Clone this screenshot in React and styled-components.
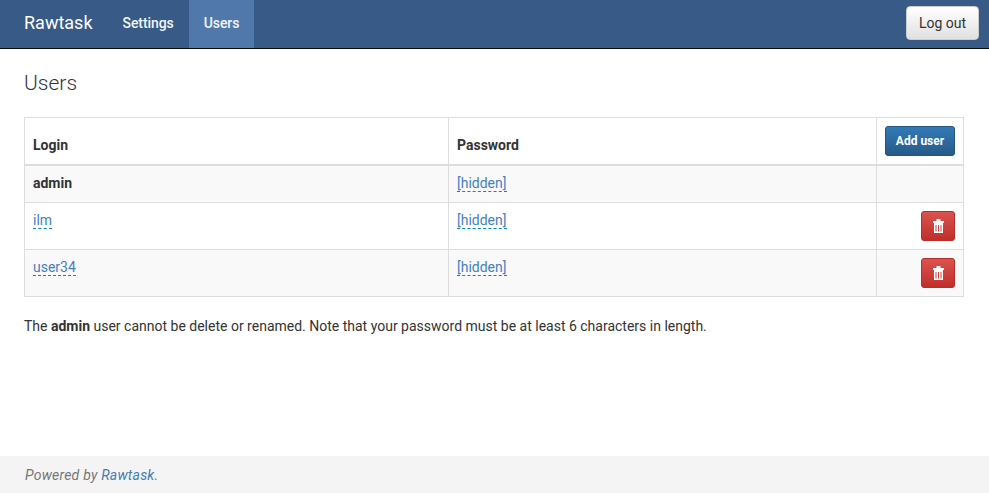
import React from 'react';
import styled, { createGlobalStyle } from 'styled-components';

const GlobalStyle = createGlobalStyle`
  html, body {
    margin: 0;
    padding: 0;
    height: 100%;
    background: #fff;
  }
  body {
    font-family: Roboto, "Liberation Sans", sans-serif;
    font-size: 14px;
    line-height: 20px;
    color: #333;
  }
  #root {
    min-height: 100vh;
    display: flex;
    flex-direction: column;
  }
  * {
    box-sizing: border-box;
  }
`;

const Navbar = styled.nav`
  display: flex;
  align-items: stretch;
  height: 49px;
  padding: 0 10px 0 9px;
  background: #375a87;
  border-bottom: 1px solid #080808;
`;

const Brand = styled.a`
  padding: 13px 15px 15px;
  font-size: 18px;
  line-height: 20px;
  color: #fff;
`;

const NavLink = styled.a`
  padding: 13px 15px 15px;
  font-weight: 500;
  letter-spacing: -0.08px;
  color: #f2f5f9;
  background: ${props => (props.active ? '#5078ab' : 'transparent')};
`;

const LogoutButton = styled.button`
  align-self: flex-start;
  margin: 6px 0 0 auto;
  width: 73px;
  height: 34px;
  padding: 0;
  font-family: inherit;
  font-size: 14px;
  color: #333;
  background: linear-gradient(to bottom, #fff 0%, #e0e0e0 100%);
  border: 1px solid #ccc;
  border-radius: 4px;
`;

const Main = styled.main`
  padding: 0 25px 0 24px;
`;

const Heading = styled.h1`
  margin: 23px 0 23px;
  font-size: 21px;
  line-height: 22px;
  font-weight: 300;
  color: #333;
`;

const UsersTable = styled.table`
  width: 939px;
  table-layout: fixed;
  border-collapse: collapse;
  border: 1px solid #ddd;
`;

const HeadCell = styled.th`
  height: 47px;
  padding: 8px 8px ${props => (props.action ? '8px' : '9px')};
  text-align: left;
  vertical-align: bottom;
  font-weight: 700;
  border: 1px solid #ddd;
  border-bottom-width: 2px;
`;

const Row = styled.tr`
  background: ${props => (props.striped ? '#f9f9f9' : '#fff')};
`;

const Cell = styled.td`
  padding: ${props => (props.right ? '8px' : '7px 8px 9px')};
  vertical-align: top;
  text-align: ${props => (props.right ? 'right' : 'left')};
  border: 1px solid #ddd;
`;

const EditableLink = styled.a`
  color: #4480bf;
  border-bottom: 1px dashed #08c;
`;

const AddButton = styled.button`
  display: block;
  margin-left: auto;
  width: 70px;
  height: 30px;
  padding: 0;
  font-family: inherit;
  font-size: 12px;
  font-weight: 700;
  color: #fff;
  background: linear-gradient(to bottom, #337ab7 0%, #265a88 100%);
  border: 1px solid #245580;
  border-radius: 3px;
`;

const DeleteButton = styled.button`
  display: inline-flex;
  align-items: center;
  justify-content: center;
  vertical-align: top;
  width: 34px;
  height: 30px;
  padding: 0;
  background: linear-gradient(to bottom, #d9534f 0%, #c12e2a 100%);
  border: 1px solid #b92c28;
  border-radius: 3px;
`;

const Note = styled.p`
  margin: 19px 0 0;
`;

const Footer = styled.footer`
  margin-top: auto;
  height: 37px;
  padding: 9px 25px;
  background: #f4f4f4;
  font-style: italic;
  letter-spacing: 0.22px;
  color: #777;
`;

const FooterLink = styled.a`
  color: #3f7cba;
`;

const TrashIcon = () => (
  <svg width="11" height="14" viewBox="0 0 11 14" fill="#fff">
    <path d="M3.500 0h4v2H11v2H0V2h3.500z" />
    <path
      d="M1 4h9v10H1zM2.500 6v6.500h1V6zm2.500 0v6.500h1V6zm2.500 0v6.500h1V6z"
      fillRule="evenodd"
    />
  </svg>
);

const users = ['ilm', 'user34'];

export default function App() {
  return (
    <>
      <GlobalStyle />
      <Navbar>
        <Brand>Rawtask</Brand>
        <NavLink>Settings</NavLink>
        <NavLink active>Users</NavLink>
        <LogoutButton>Log out</LogoutButton>
      </Navbar>
      <Main>
        <Heading>Users</Heading>
        <UsersTable>
          <colgroup>
            <col style={{ width: 424 }} />
            <col style={{ width: 428 }} />
            <col style={{ width: 87 }} />
          </colgroup>
          <thead>
            <tr>
              <HeadCell>Login</HeadCell>
              <HeadCell>Password</HeadCell>
              <HeadCell action><AddButton>Add user</AddButton></HeadCell>
            </tr>
          </thead>
          <tbody>
            <Row striped>
              <Cell><strong>admin</strong></Cell>
              <Cell><EditableLink>[hidden]</EditableLink></Cell>
              <Cell />
            </Row>
            {users.map((name, i) => (
              <Row key={name} striped={i % 2 === 1}>
                <Cell><EditableLink>{name}</EditableLink></Cell>
                <Cell><EditableLink>[hidden]</EditableLink></Cell>
                <Cell right><DeleteButton><TrashIcon /></DeleteButton></Cell>
              </Row>
            ))}
          </tbody>
        </UsersTable>
        <Note>The <strong>admin</strong> user cannot be delete or renamed. Note that your password must be at least 6 characters in length.</Note>
      </Main>
      <Footer>Powered by <FooterLink>Rawtask</FooterLink>.</Footer>
    </>
  );
}
